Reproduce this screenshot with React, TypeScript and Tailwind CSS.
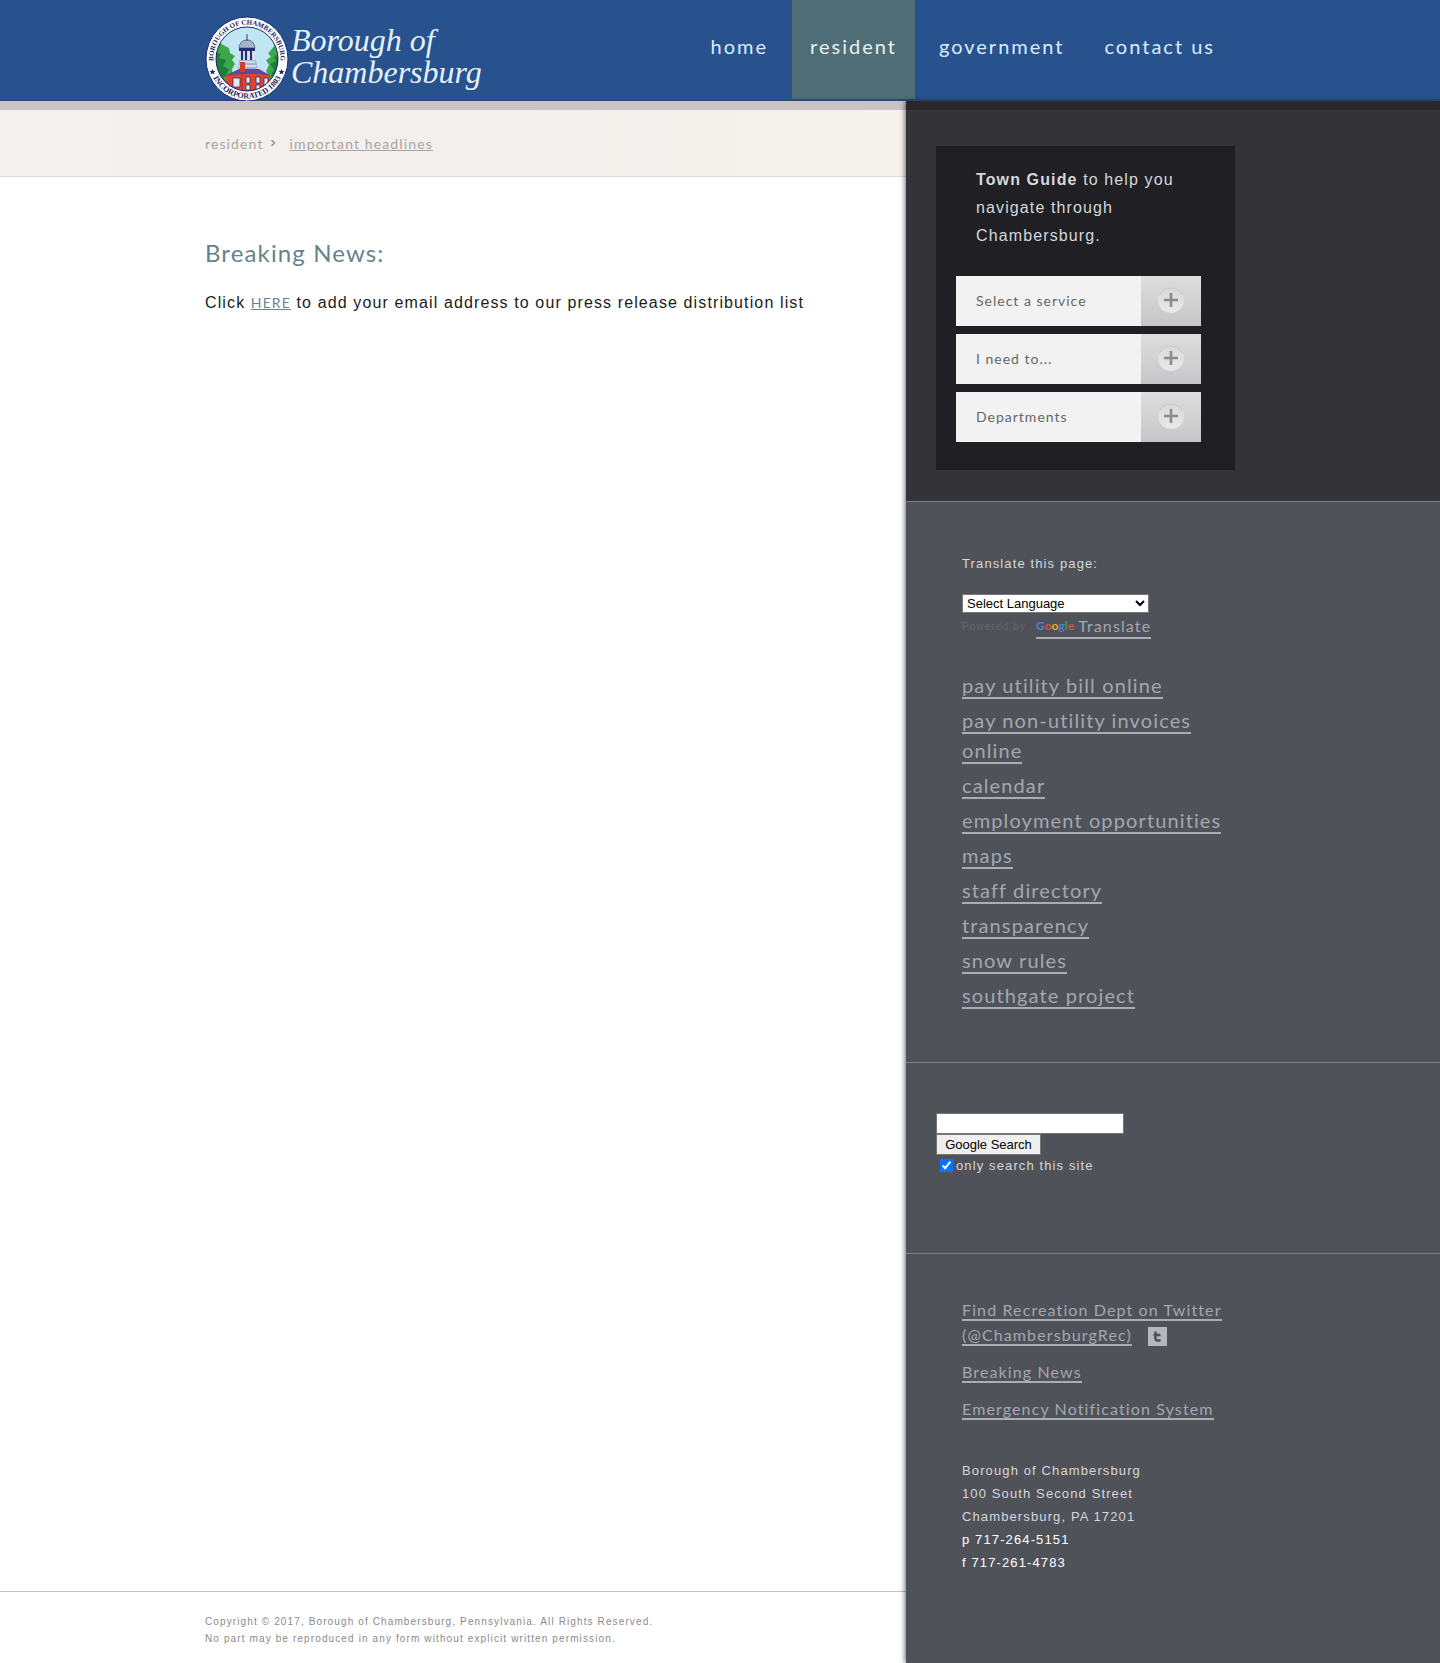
import React from "react";

const humanist = "font-['Lato','Noto_Sans',sans-serif]";

const navItems = [
  { label: "home", active: false },
  { label: "resident", active: true },
  { label: "government", active: false },
  { label: "contact us", active: false },
];

const guideItems = ["Select a service", "I need to...", "Departments"];

const quickLinks = [
  "pay utility bill online",
  "pay non-utility invoices online",
  "calendar",
  "employment opportunities",
  "maps",
  "staff directory",
  "transparency",
  "snow rules",
  "southgate project",
];

function Seal() {
  return (
    <svg viewBox="0 0 84 86" className="h-[86px] w-[84px] shrink-0" aria-hidden="true">
      <defs>
        <clipPath id="seal-inner">
          <ellipse cx="42" cy="43" rx="31" ry="32" />
        </clipPath>
        <path id="seal-top" d="M10.500 54.800 A33.500 34.500 0 1 1 73.500 54.800" />
        <path id="seal-bottom" d="M4.800 53.200 A38.500 39.500 0 0 0 79.200 53.200" />
      </defs>
      <ellipse cx="42" cy="43" rx="41" ry="42" fill="#fff" stroke="#1d2f7c" strokeWidth="1" />
      <ellipse cx="42" cy="43" rx="31" ry="32" fill="#bfe6f2" />
      <g clipPath="url(#seal-inner)">
        <path d="M8 30l7-3 5 3 4 2 1 5 5 3-3 4 3 4-3 5 1 7-4 9-14 1z" fill="#3da64a" />
        <path d="M10 36l6 2-2 4 7 2-3 6 6 3-4 8-9 2z" fill="#1e7d3a" />
        <path d="M76 30l-6-1-4 5-3 3 3 4-5 3 3 5-3 6 7 14 10 0z" fill="#3da64a" />
        <path d="M74 38l-5 3 2 4-6 3 4 5-3 7 8 4z" fill="#1e7d3a" />
        <path d="M34 32q1-8 8-8t8 8z" fill="#a7b5c4" stroke="#4c5d80" strokeWidth=".8" />
        <path d="M42 18v7" stroke="#34406b" strokeWidth="1" />
        <rect x="34" y="32" width="16" height="3" fill="#26306f" />
        <rect x="35" y="35" width="14" height="9" fill="#dfe6f2" />
        <path d="M37 35v9M41 35v9M46 35v9" stroke="#26306f" strokeWidth="2.2" />
        <path d="M34 44h17l2 13H33z" fill="#a9b0d6" />
        <path d="M35 46h15M34 50h17" stroke="#fff" strokeWidth="1.2" />
        <path d="M21 59l13-5h18l13 5v24H21z" fill="#e0442c" />
        <path d="M20 60l14-7h20l12 7-12-2H36z" fill="#5d4a96" />
        <path d="M35 46h5v10h-5z" fill="#d23f2a" />
        <path d="M28 62h7v9h-7z" fill="#dfe9f8" stroke="#26306f" strokeWidth=".8" />
        <path d="M41 61h4v6h-4zM41 69h4v5h-4zM51 61h4v6h-4zM51 69h4v5h-4zM59 62h4v8h-4z" fill="#dfe9f8" stroke="#26306f" strokeWidth=".8" />
        <path d="M37 57v22" stroke="#9c2c2c" strokeWidth=".8" />
        <path d="M10 66l8-5 5 7 5 8H12z" fill="#2c9144" />
        <path d="M74 64l-7 2-3 9 9 3z" fill="#2c9144" />
      </g>
      <ellipse cx="42" cy="43" rx="31" ry="32" fill="none" stroke="#1d2460" strokeWidth="1" />
      <g fill="#1d2460" fontFamily="Liberation Serif, serif" fontStyle="normal" fontWeight="700">
        <text textAnchor="middle" fontSize="7">
          <textPath href="#seal-top" startOffset="50%">BOROUGH OF CHAMBERSBURG</textPath>
        </text>
        <text textAnchor="middle" fontSize="8">
          <textPath href="#seal-bottom" startOffset="50%">INCORPORATED 1803</textPath>
        </text>
      </g>
      <g fill="#1d2460">
        <path d="M7.500 53l.9 2h2.100l-1.600 1.300.6 2.100-2-1.200-2 1.200.6-2.100L4.500 55h2.100z" />
        <path d="M76.500 53l.9 2h2.100l-1.600 1.300.6 2.100-2-1.200-2 1.200.6-2.100-1.600-1.300h2.100z" />
      </g>
    </svg>
  );
}

function PlusBadge() {
  return (
    <svg viewBox="0 0 28 28" className="h-7 w-7" aria-hidden="true">
      <defs>
        <linearGradient id="badge-fill" x1="0" y1="0" x2="0" y2="1">
          <stop offset="0" stopColor="#d8d8d8" />
          <stop offset="1" stopColor="#e9e9e9" />
        </linearGradient>
      </defs>
      <circle cx="14" cy="14" r="13" fill="url(#badge-fill)" />
      <path d="M2.500 9A13 13 0 0 1 25.500 9" fill="none" stroke="#c6c6c6" strokeWidth="1" />
      <path d="M14 7v14M7 14h14" stroke="#8b8b8b" strokeWidth="2.600" />
    </svg>
  );
}

function TwitterBadge() {
  return (
    <svg viewBox="0 0 19 19" className="h-[19px] w-[19px]" aria-hidden="true">
      <rect width="19" height="19" fill="#b4b7bb" />
      <path d="M7.500 4.500v7q0 2 2 2h3M5.500 8h7" fill="none" stroke="#4f5159" strokeWidth="2.400" />
    </svg>
  );
}

function SideLink({ children }: { children: React.ReactNode }) {
  return (
    <a href="#" className="border-b-2 border-[#a9adb5] text-[#a3a7af]">
      {children}
    </a>
  );
}

export default function App() {
  return (
    <div className="flex min-h-screen flex-col bg-white font-['Liberation_Sans',Arial,sans-serif] tracking-[0.07em]">
      <header className="h-[101px] border-b-2 border-[#264a7a] bg-[#27528e]">
        <div className="mx-auto flex w-full max-w-[1030px] items-start justify-between">
          <a href="#" className="flex pt-4 font-['Liberation_Serif',serif] text-[32px] leading-[32px] tracking-normal text-[#e4f0fb] italic">
            <Seal />
            <span className="pt-2 pl-0.5">
              Borough of
              <br />
              Chambersburg
            </span>
          </a>
          <nav className={`${humanist} flex text-[20px] tracking-[2px] text-[#dcecff]`}>
            {navItems.map((item) => (
              <a
                key={item.label}
                href="#"
                className={
                  item.active
                    ? "mx-1 flex h-[99px] items-center bg-[#4e6d76] px-[18px] pb-2 text-[#e6f1f2]"
                    : "flex h-[99px] items-center px-5 pb-2"
                }
              >
                {item.label}
              </a>
            ))}
          </nav>
        </div>
      </header>

      <div className="flex flex-1">
        <div className="flex min-w-0 flex-1 flex-col">
          <div className="border-t-9 border-b border-t-[#c9c4c1] border-b-[#dddad8] bg-linear-to-r from-[#f5f1ee] via-[#f2efec] to-[#f6f2ee]">
            <p className={`${humanist} flex h-[66px] items-center gap-1.5 pl-[calc(50vw-515px)] text-[14px] text-[#aaa6a3]`}>
              <a href="#">resident</a>
              <svg viewBox="0 0 6 8" className="h-2 w-1.5" aria-hidden="true">
                <path d="M1.500 1L4.500 4L1.500 7" fill="none" stroke="#99958f" strokeWidth="1.500" />
              </svg>
              <a href="#" className="pl-2 underline">important headlines</a>
            </p>
          </div>

          <main className="flex-1 pt-[60px] pl-[calc(50vw-515px)]">
            <h1 className={`${humanist} text-[24px] leading-8 text-[#64838e]`}>Breaking News:</h1>
            <p className="pt-5 text-[16px] leading-7 text-[#1b1b1b]">
              Click{" "}
              <a href="#" className={`${humanist} text-[14px] text-[#6d7f95] underline`}>HERE</a>{" "}
              to add your email address to our press release distribution list
            </p>
          </main>

          <footer className="border-t border-[#c4c4c4] pt-[21px] pb-4 pl-[calc(50vw-515px)] text-[10px] leading-[17px] text-[#8a8a8a]">
            <p>Copyright © 2017, Borough of Chambersburg, Pennsylvania. All Rights Reserved.</p>
            <p>No part may be reproduced in any form without explicit written permission.</p>
          </footer>
        </div>

        <aside className="w-[calc(50%-186px)] bg-[#50525a] text-[13px] text-[#d5d7db] shadow-[-1px_0_5px_rgba(40,40,55,0.7)]">
          <section className="border-t-9 border-b border-t-[#2a272b] border-b-[#7a7e86] bg-[#343338] pt-9 pb-[31px] pl-[30px]">
            <div className="w-[299px] bg-[#201f24] pt-5 pb-7 pl-5">
              <p className="pl-5 text-[16px] leading-7">
                <strong>Town Guide</strong> to help you
                <br />
                navigate through
                <br />
                Chambersburg.
              </p>
              <div className="flex w-[245px] flex-col gap-2 pt-[26px]">
                {guideItems.map((label) => (
                  <button
                    key={label}
                    type="button"
                    className={`${humanist} flex h-[50px] items-stretch bg-[#f2f2f2] text-left text-[14px] tracking-[1px] text-[#666]`}
                  >
                    <span className="flex flex-1 items-center pb-0.5 pl-5">{label}</span>
                    <span className="flex w-[60px] items-center justify-center bg-linear-to-b from-[#dedede] to-[#c6c6c8] pb-0.5">
                      <PlusBadge />
                    </span>
                  </button>
                ))}
              </div>
            </div>
          </section>

          <section className="border-b border-[#7a7e86] pt-[52px] pb-[52px] pl-14">
            <label htmlFor="language" className="block leading-5">Translate this page:</label>
            <select
              id="language"
              className="mt-5 block h-[19px] w-[187px] border border-[#767676] bg-white text-[13px] tracking-normal text-black"
            >
              <option>Select Language</option>
            </select>
            <p className="flex h-[27px] items-center text-[10px] text-[#62646b]">
              <span className="w-[74px]">Powered by</span>
              <a
                href="#"
                className={`${humanist} flex items-center gap-1 border-b-2 border-[#a9adb5] text-[16px] leading-[22px] text-[#a3a7af]`}
              >
                <span className="text-[12px] font-bold tracking-normal">
                  <span className="text-[#4a7fd6]">G</span>
                  <span className="text-[#d0524a]">o</span>
                  <span className="text-[#e0ac2e]">o</span>
                  <span className="text-[#4a7fd6]">g</span>
                  <span className="text-[#3d9c5c]">l</span>
                  <span className="text-[#d0524a]">e</span>
                </span>
                Translate
              </a>
            </p>
            <ul className={`${humanist} flex w-[273px] flex-col gap-[5px] pt-[30px] text-[20px] leading-[30px]`}>
              {quickLinks.map((label) => (
                <li key={label}>
                  <SideLink>{label}</SideLink>
                </li>
              ))}
            </ul>
          </section>

          <section className="border-b border-[#7a7e86] pt-[50px] pb-[77px] pl-[30px]">
            <form onSubmit={(e) => e.preventDefault()}>
              <input
                type="text"
                aria-label="Search"
                className="block h-[21px] w-[188px] border border-[#767676] bg-white px-1 text-[13px] text-black"
              />
              <button
                type="submit"
                className="block h-[21px] w-[105px] border border-[#767676] bg-[#efefef] text-[13px] tracking-normal text-black"
              >
                Google Search
              </button>
              <label className="flex h-[21px] items-center gap-[3px] pl-1">
                <input type="checkbox" defaultChecked className="h-[13px] w-[13px]" />
                only search this site
              </label>
            </form>
          </section>

          <section className="pt-[43px] pb-7 pl-14">
            <ul className={`${humanist} flex w-[273px] flex-col gap-3 text-[16px] leading-[25px]`}>
              <li>
                <SideLink>
                  Find Recreation Dept on Twitter
                  <br />
                  (@ChambersburgRec)
                </SideLink>
                <a href="#" aria-label="Twitter" className="ml-4 inline-block align-middle">
                  <TwitterBadge />
                </a>
              </li>
              <li>
                <SideLink>Breaking News</SideLink>
              </li>
              <li>
                <SideLink>Emergency Notification System</SideLink>
              </li>
            </ul>
            <address className="pt-[38px] leading-[23px] not-italic">
              Borough of Chambersburg
              <br />
              100 South Second Street
              <br />
              Chambersburg, PA 17201
              <br />
              <span className="text-white">
                p 717-264-5151
                <br />f 717-261-4783
              </span>
            </address>
          </section>
        </aside>
      </div>
    </div>
  );
}
